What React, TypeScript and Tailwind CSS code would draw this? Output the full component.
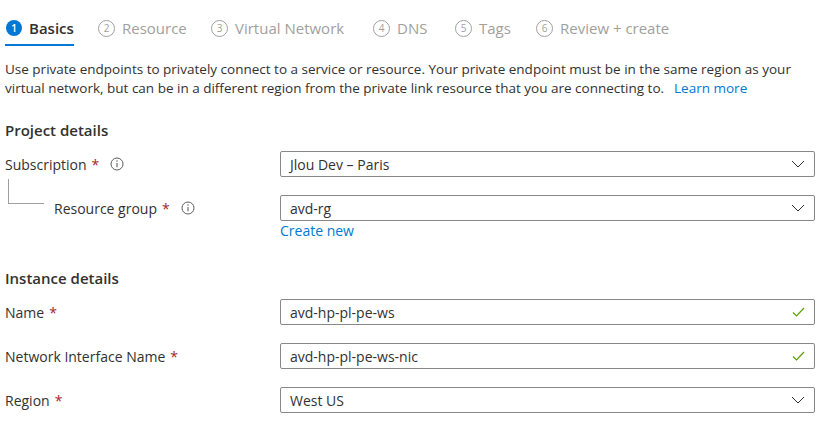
import React from "react";

const tabs = [
  { n: 1, label: "Basics", w: "w-[92px]", active: true },
  { n: 2, label: "Resource", w: "w-[113px]" },
  { n: 3, label: "Virtual Network", w: "w-[162px]" },
  { n: 4, label: "DNS", w: "w-[82px]" },
  { n: 5, label: "Tags", w: "w-[81px]" },
  { n: 6, label: "Review + create", w: "w-[140px]" },
];

function Chevron() {
  return (
    <svg width="14" height="8" viewBox="0 0 14 8" fill="none" aria-hidden="true">
      <path d="M1 1l6 6 6-6" stroke="#323130" strokeWidth="1" />
    </svg>
  );
}

function Check() {
  return (
    <svg width="13" height="10" viewBox="0 0 13 10" fill="none" aria-hidden="true">
      <path d="M1 5.5l3.5 3.5L12 1" stroke="#57a300" strokeWidth="1.2" />
    </svg>
  );
}

function Info() {
  return (
    <svg width="14" height="14" viewBox="0 0 14 14" fill="none" aria-hidden="true">
      <circle cx="7" cy="7" r="6" stroke="#605e5c" strokeWidth="1" />
      <path d="M7 6v4.2" stroke="#605e5c" strokeWidth="1.1" />
      <circle cx="7" cy="4.1" r="0.75" fill="#605e5c" />
    </svg>
  );
}

function Field({ value, kind }: { value: string; kind: "select" | "valid" }) {
  return (
    <div className="flex h-[26px] w-[535px] items-center justify-between rounded-[2px] border border-[#8a8886] pl-[9px] pr-[9px] text-[14px] text-[#323130]">
      <span>{value}</span>
      {kind === "select" ? <Chevron /> : <Check />}
    </div>
  );
}

function Req() {
  return <span className="ml-[5px] text-[#a4262c]">*</span>;
}

export default function App() {
  return (
    <div className="h-[433px] w-[838px] overflow-hidden bg-white text-[#323130] [font-family:'Open_Sans',sans-serif]">
      {/* wizard tabs */}
      <div className="flex pl-[6px] pt-[12px]">
        {tabs.map((t) => (
          <div key={t.n} className={`${t.w} shrink-0`}>
            <div
              className={`inline-flex h-[34px] items-center gap-[7px] border-b-2 ${
                t.active ? "-ml-[1px] border-[#0078d4] pl-[1px]" : "border-transparent"
              }`}
            >
              {t.active ? (
                <span className="flex h-[16px] w-[16px] items-center justify-center rounded-full bg-[#0078d4] text-[10px] font-semibold text-white">
                  {t.n}
                </span>
              ) : (
                <span className="flex h-[17px] w-[17px] items-center justify-center rounded-full border border-[#a19f9d] text-[10px] text-[#a19f9d]">
                  {t.n}
                </span>
              )}
              <span
                className={`text-[15px] ${t.active ? "font-semibold text-[#323130]" : "text-[#a19f9d]"}`}
              >
                {t.label}
              </span>
            </div>
          </div>
        ))}
      </div>

      <div className="mt-[14px] pl-[5px] text-[13.5px] leading-[19px]">
        <div className="whitespace-nowrap">
          Use private endpoints to privately connect to a service or resource. Your private endpoint must be in
          the same region as your
        </div>
        <div className="flex gap-[10px] whitespace-nowrap">
          <span>
            virtual network, but can be in a different region from the private link resource that you are
            connecting to.
          </span>
          <span className="text-[#0078d4]">Learn more</span>
        </div>
      </div>

      <div className="mt-[22px] pl-[5px] text-[15px] font-semibold leading-[20px]">Project details</div>

      <div className="mt-[11px] flex flex-col gap-[18px] pl-[5px]">
        <div className="flex items-center">
          <div className="flex w-[275px] items-center text-[14px]">
            Subscription
            <Req />
            <span className="ml-[11px] flex">
              <Info />
            </span>
          </div>
          <Field value="Jlou Dev – Paris" kind="select" />
        </div>

        <div>
          <div className="flex items-center">
            <div className="flex h-[26px] w-[275px] items-center text-[14px]">
              <div className="ml-[3px] -mt-[16px] h-[25px] w-[36px] shrink-0 self-start border-b border-l border-[#a19f9d]" />
              <span className="ml-[10px]">Resource group</span>
              <Req />
              <span className="ml-[11px] flex">
                <Info />
              </span>
            </div>
            <Field value="avd-rg" kind="select" />
          </div>
          <div className="ml-[275px] text-[14px] leading-[20px] text-[#0078d4]">Create new</div>
        </div>
      </div>

      <div className="mt-[27px] pl-[5px] text-[15px] font-semibold leading-[20px]">Instance details</div>

      <div className="mt-[11px] flex flex-col gap-[18px] pl-[5px]">
        <div className="flex items-center">
          <div className="w-[275px] text-[14px]">
            Name
            <Req />
          </div>
          <Field value="avd-hp-pl-pe-ws" kind="valid" />
        </div>
        <div className="flex items-center">
          <div className="w-[275px] text-[14px]">
            Network Interface Name
            <Req />
          </div>
          <Field value="avd-hp-pl-pe-ws-nic" kind="valid" />
        </div>
        <div className="flex items-center">
          <div className="w-[275px] text-[14px]">
            Region
            <Req />
          </div>
          <Field value="West US" kind="select" />
        </div>
      </div>
    </div>
  );
}
